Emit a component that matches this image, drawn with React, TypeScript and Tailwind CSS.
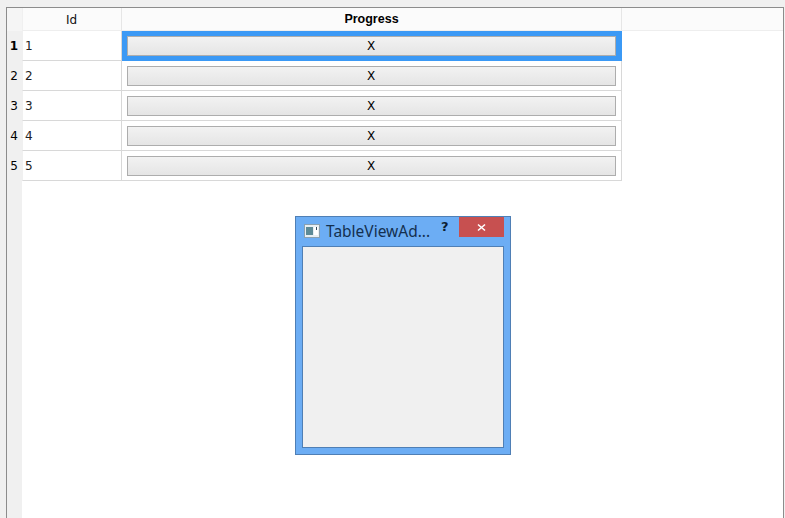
const rows = [1, 2, 3, 4, 5];

function Row({ n, selected }: { n: number; selected: boolean }) {
  return (
    <div className="flex h-[30px]">
      <div className={`w-[15px] shrink-0 bg-[#f0f0f0] flex items-center justify-center pr-[1px] text-[12px] text-black ${selected ? "font-bold" : ""}`}>
        {n}
      </div>
      <div className="w-[100px] shrink-0 border-l border-l-[#f0f0f0] border-r border-r-[#d8d8d8] border-b border-b-[#d8d8d8] pl-[2px] flex items-center text-[12px] text-[#222]">
        {n}
      </div>
      <div
        className={`w-[500px] shrink-0 flex items-center border-r border-b pl-[5px] pr-[5px] ${
          selected
            ? "bg-[#3b99f5] border-[#3b99f5]"
            : "border-[#d8d8d8]"
        }`}
      >
        <div className="w-full h-[20px] border border-[#adadad] bg-gradient-to-b from-[#f2f2f2] to-[#e5e5e5] flex items-center justify-center pr-[1px] text-[12px] text-black">
          X
        </div>
      </div>
    </div>
  );
}

export default function App() {
  return (
    <div className="relative w-[785px] h-[518px] overflow-hidden bg-[#f0f0f0] pl-[6px] pt-[7px] font-['DejaVu_Sans',sans-serif]">
      <div className="w-[778px] h-[511px] border-l border-t border-r border-[#8c8c8c] bg-white relative">
        <div className="flex h-[23px]">
          <div className="w-[15px] shrink-0 bg-[#f5f5f5]" />
          <div className="w-[100px] shrink-0 bg-[#fbfbfb] border-l border-l-[#f0f0f0] border-r border-r-[#e6e6e6] border-b border-b-[#eeeeee] flex items-center justify-center pt-[1px] pr-[1px] text-[12px] text-[#111]">
            Id
          </div>
          <div className="w-[500px] shrink-0 bg-[#fbfbfb] border-r border-r-[#e6e6e6] border-b border-b-[#eeeeee] flex items-center justify-center pt-[1px] text-[12.5px] font-bold text-black font-['Liberation_Sans',sans-serif]">
            Progress
          </div>
          <div className="flex-1 bg-[#fbfbfb] border-b border-b-[#eeeeee]" />
        </div>
        <div className="absolute left-0 top-[173px] bottom-0 w-[15px] bg-[#f0f0f0]" />
        {rows.map((n) => (
          <Row key={n} n={n} selected={n === 1} />
        ))}
      </div>

      <div className="absolute left-[295px] top-[216px] w-[216px] h-[239px] bg-[#6cadf4] border border-[#4f7fb5] flex flex-col">
        <div className="h-[29px] shrink-0 flex relative pl-[8px]">
          <svg width="16" height="14" viewBox="0 0 16 14" className="mt-[7px]">
            <rect x="0.5" y="0.5" width="15" height="13" fill="#e8eef2" stroke="#8aa0b0" />
            <rect x="2" y="3" width="7" height="8" fill="#5d8a96" />
            <rect x="10" y="3" width="4" height="8" fill="#ffffff" />
            <rect x="12" y="3" width="1" height="3" fill="#33475a" />
          </svg>
          <span className="ml-[6px] mt-[4px] text-[15.5px] leading-[20px] text-[#14304f] font-['Noto_Sans',sans-serif]">TableViewAd...</span>
          <span className="absolute left-[145px] top-[1px] text-[13px] leading-[18px] font-bold text-[#0d1f33]">?</span>
          <div className="absolute left-[163px] top-0 w-[45px] h-[20px] bg-[#c75050] flex items-center justify-center">
            <svg width="9" height="9" viewBox="0 0 9 9">
              <path d="M1 1.5 L8 7.5 M8 1.5 L1 7.5" stroke="#ffffff" strokeWidth="1.6" />
            </svg>
          </div>
        </div>
        <div className="ml-[6px] w-[202px] h-[202px] bg-[#f0f0f0] border border-[#4f7fb5]" />
      </div>
    </div>
  );
}
